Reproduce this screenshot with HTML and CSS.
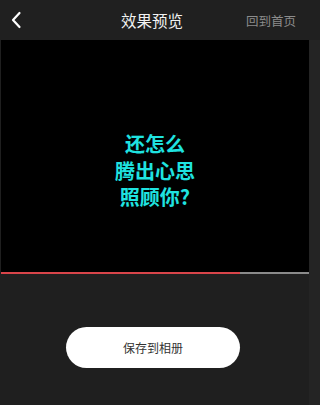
FILE: index.html
```html
<!DOCTYPE html>
<html lang="zh">
<head>
    <meta charset="UTF-8">
    <meta name="viewport" content="width=device-width, initial-scale=1.0">
    <title>效果预览</title>
    <link rel="stylesheet" href="styles.css">
</head>
<body>
    <header class="topbar">
        <button class="back-btn" aria-label="返回">
            <svg width="12" height="18" viewBox="0 0 12 18">
                <path d="M9.5 2 L3 9 L9.5 16" fill="none" stroke="#fff" stroke-width="2.2" stroke-linecap="round" stroke-linejoin="round"/>
            </svg>
        </button>
        <h1 class="title">效果预览</h1>
        <a class="home-link" href="#">回到首页</a>
    </header>

    <div class="body-row">
        <main class="stage">
            <section class="player">
                <p class="caption">还怎么<br>腾出心思<br>照顾你?</p>
            </section>
            <div class="progress">
                <div class="progress-fill"></div>
            </div>

            <div class="actions">
                <button class="save-btn">保存到相册</button>
            </div>
        </main>
        <aside class="side-strip"></aside>
    </div>
</body>
</html>
```

FILE: styles.css
```css
/* General */
html, body {
    margin: 0;
    padding: 0;
}

body {
    width: 320px;
    height: 405px;
    background-color: #1f1f1f;
    font-family: "Noto Sans CJK SC", "Noto Sans", sans-serif;
    overflow: hidden;
}

/* Top bar */
.topbar {
    height: 40px;
    display: grid;
    grid-template-columns: 48px 1fr 74px;
    align-items: center;
    padding-left: 10px;
    background-color: #202020;
}

.back-btn {
    background: none;
    border: none;
    padding: 0;
    width: 14px;
    height: 20px;
    display: flex;
    align-items: center;
    cursor: pointer;
}

.title {
    margin: 0;
    text-align: center;
    font-size: 15.5px;
    font-weight: normal;
    color: #f2f2f2;
}

.home-link {
    font-size: 12.5px;
    color: #8c8c8c;
    text-decoration: none;
}

/* Preview */
.body-row {
    display: flex;
    height: 365px;
}

.stage {
    width: 308px;
    margin-left: 1px;
}

.side-strip {
    flex: 1;
    background-color: #242424;
}

.player {
    height: 232px;
    background-color: #000;
    display: flex;
    justify-content: center;
    align-items: center;
    padding-top: 30px;
    box-sizing: border-box;
}

.caption {
    margin: 0;
    text-align: center;
    color: #1fe3e0;
    font-size: 20px;
    font-weight: bold;
    line-height: 26.5px;
}

.progress {
    height: 2px;
    background-color: #8a8a8a;
}

.progress-fill {
    width: 239px;
    height: 100%;
    background-color: #d9454a;
}

/* Save button */
.actions {
    display: flex;
    justify-content: center;
    padding: 53px 4px 0 0;
}

.save-btn {
    width: 174px;
    height: 41px;
    border: none;
    border-radius: 21px;
    background-color: #fff;
    color: #333;
    font-family: inherit;
    font-size: 12px;
    cursor: pointer;
}
```
